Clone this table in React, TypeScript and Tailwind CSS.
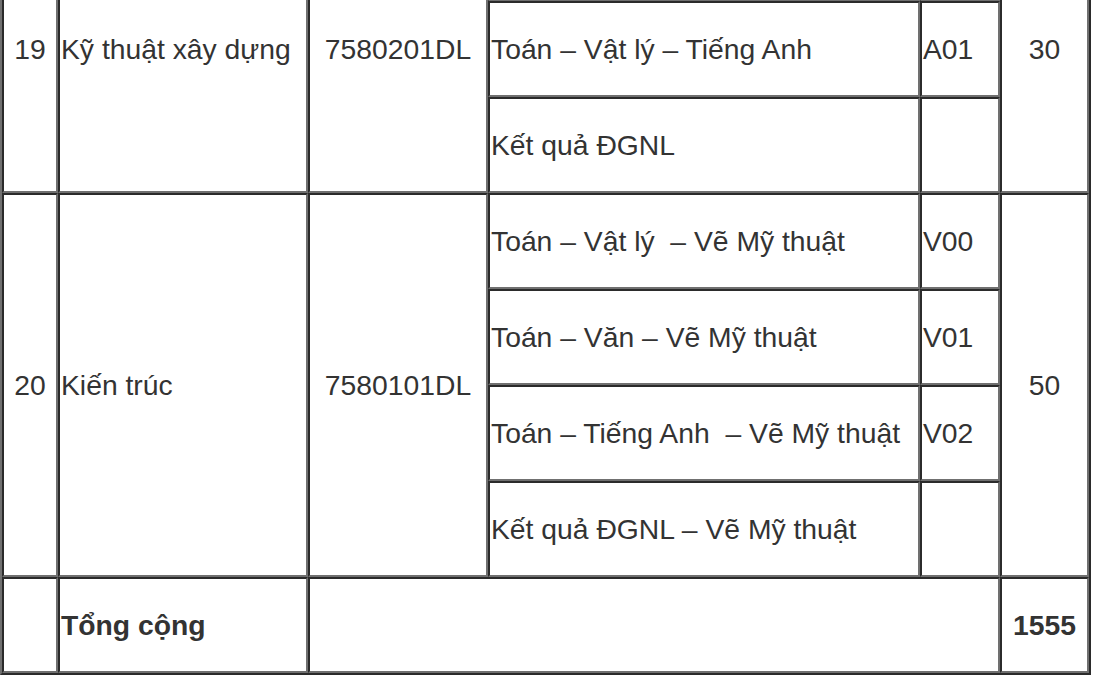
import React from "react";

const td =
  "border-2 border-t-[#2b2b2b] border-l-[#2b2b2b] border-b-[#707070] border-r-[#707070] p-[1px] align-middle";

export default function App() {
  return (
    <div className="h-[675px] w-full overflow-hidden bg-white">
      <table
        className="-mt-[97px] w-[1091px] table-fixed border-separate border-spacing-0 border-2 border-t-[#707070] border-l-[#707070] border-b-[#2b2b2b] border-r-[#2b2b2b] text-[28.3px] text-[#333333]"
        style={{ fontFamily: '"Liberation Sans", Arial, sans-serif' }}
      >
        <colgroup>
          <col className="w-[56px]" />
          <col className="w-[250px]" />
          <col className="w-[180px]" />
          <col className="w-[432px]" />
          <col className="w-[80px]" />
          <col className="w-[89px]" />
        </colgroup>
        <tbody>
          {/* row 19 (first sub-row is scrolled above the view) */}
          <tr className="h-[96px]">
            <td rowSpan={3} className={`${td} text-center`}>19</td>
            <td rowSpan={3} className={td}>Kỹ thuật xây dựng</td>
            <td rowSpan={3} className={`${td} text-center`}>7580201DL</td>
            <td className={td}></td>
            <td className={td}></td>
            <td rowSpan={3} className={`${td} text-center`}>30</td>
          </tr>
          <tr className="h-[96px]">
            <td className={td}>Toán – Vật lý – Tiếng Anh</td>
            <td className={td}>A01</td>
          </tr>
          <tr className="h-[96px]">
            <td className={td}>Kết quả ĐGNL</td>
            <td className={td}></td>
          </tr>

          {/* row 20 */}
          <tr className="h-[96px]">
            <td rowSpan={4} className={`${td} text-center`}>20</td>
            <td rowSpan={4} className={td}>Kiến trúc</td>
            <td rowSpan={4} className={`${td} text-center`}>7580101DL</td>
            <td className={td}>Toán – Vật lý{"\u00a0 "}– Vẽ Mỹ thuật</td>
            <td className={td}>V00</td>
            <td rowSpan={4} className={`${td} text-center`}>50</td>
          </tr>
          <tr className="h-[96px]">
            <td className={td}>Toán – Văn – Vẽ Mỹ thuật</td>
            <td className={td}>V01</td>
          </tr>
          <tr className="h-[96px]">
            <td className={td}>Toán – Tiếng Anh{"\u00a0 "}– Vẽ Mỹ thuật</td>
            <td className={td}>V02</td>
          </tr>
          <tr className="h-[96px]">
            <td className={td}>Kết quả ĐGNL – Vẽ Mỹ thuật</td>
            <td className={td}></td>
          </tr>

          {/* total */}
          <tr className="h-[96px]">
            <td className={td}></td>
            <td className={`${td} font-bold`}>Tổng cộng</td>
            <td colSpan={3} className={td}></td>
            <td className={`${td} text-center font-bold`}>1555</td>
          </tr>
        </tbody>
      </table>
    </div>
  );
}
